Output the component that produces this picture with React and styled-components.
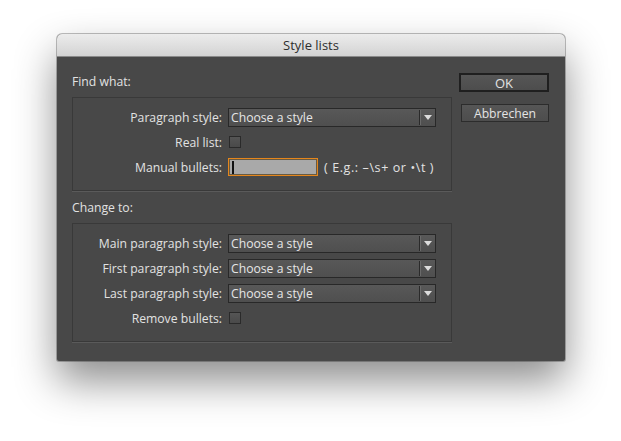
import React from "react";
import styled, { createGlobalStyle } from "styled-components";

const Global = createGlobalStyle`
  html, body { margin: 0; padding: 0; background: #ffffff; }
  body { font-family: "Open Sans", "Noto Sans", sans-serif; }
`;

const Page = styled.div`
  width: 621px;
  height: 441px;
  padding: 34px 0 0 57px;
  box-sizing: border-box;
  overflow: hidden;
`;

const Dialog = styled.div`
  width: 508px;
  height: 327px;
  border-radius: 5px 5px 2px 2px;
  background: #484848;
  box-shadow: 0 20px 42px rgba(0, 0, 0, 0.45), 0 0 0 1px rgba(0, 0, 0, 0.25);
  display: flex;
  flex-direction: column;
  overflow: hidden;
`;

const TitleBar = styled.div`
  height: 22px;
  flex: none;
  background: linear-gradient(#ececec, #d3d3d3);
  border-bottom: 1px solid #8a8a8a;
  display: flex;
  align-items: center;
  justify-content: center;
  font-size: 13px;
  color: #2e2e2e;
`;

const Body = styled.div`
  flex: 1;
  display: flex;
  padding: 0 16px 0 15px;
`;

const Main = styled.div`
  width: 380px;
  display: flex;
  flex-direction: column;
  padding-top: 17px;
`;

const SectionLabel = styled.div`
  height: 16px;
  line-height: 16px;
  font-size: 12.2px;
  color: #e2e2e2;
  margin-top: ${(p) => p.$mt || 0}px;
  margin-bottom: 7px;
`;

const Group = styled.div`
  border: 1px solid #393939;
  box-shadow: 0 1px 0 #5a5a5a;
  padding: 9px 0 13px;
  display: flex;
  flex-direction: column;
  gap: 5px;
`;

const Row = styled.div`
  height: 20px;
  display: grid;
  grid-template-columns: 149px auto auto;
  column-gap: 6px;
  align-items: center;
  justify-content: start;
`;

const Label = styled.div`
  text-align: right;
  font-size: 12.2px;
  color: #e2e2e2;
  white-space: nowrap;
`;

const Select = styled.div`
  height: 17px;
  width: 204px;
  border: 1px solid #282828;
  background: linear-gradient(#585858, #4f4f4f);
  display: flex;
  align-items: center;
  font-size: 12.2px;
  color: #e6e6e6;
  padding-left: 2px;
`;

const SelectText = styled.span`
  flex: 1;
`;

const Sep = styled.span`
  width: 1px;
  height: 15px;
  background: #2a2a2a;
  border-right: 1px solid #6a6a6a;
  margin-right: 3px;
`;

const Arrow = styled.svg`
  width: 8px;
  height: 5px;
  margin-right: 3px;
`;

const Check = styled.div`
  width: 10px;
  height: 10px;
  margin-left: 1px;
  border: 1px solid #2a2a2a;
  background: linear-gradient(#555, #4a4a4a);
`;

const Input = styled.div`
  width: 85px;
  height: 16px;
  border: 1px solid #e4861c;
  box-shadow: inset 0 0 0 1px #6a5a40;
  background: #a9a9a9;
  display: flex;
  align-items: center;
  padding-left: 3px;
`;

const Caret = styled.span`
  width: 2px;
  height: 13px;
  background: #111;
`;

const Hint = styled.span`
  font-size: 12.5px;
  letter-spacing: 0.6px;
  color: #e2e2e2;
  white-space: nowrap;
`;

const Side = styled.div`
  margin-left: auto;
  padding-top: 16px;
  display: flex;
  flex-direction: column;
  align-items: flex-end;
  gap: 12px;
`;

const Button = styled.div`
  width: 86px;
  height: ${(p) => (p.$default ? 15 : 16)}px;
  border: ${(p) => (p.$default ? "2px solid #1f1f1f" : "1px solid #2c2c2c")};
  background: linear-gradient(#565656, #4d4d4d);
  color: #e4e4e4;
  font-size: ${(p) => (p.$default ? 13 : 12.2)}px;
  display: flex;
  align-items: center;
  justify-content: center;
`;

const SelectField = () => (
  <Select>
    <SelectText>Choose a style</SelectText>
    <Sep />
    <Arrow viewBox="0 0 8 5">
      <path d="M0 0 H8 L4 5 Z" fill="#dcdcdc" />
    </Arrow>
  </Select>
);

export default function App() {
  return (
    <>
      <Global />
      <Page>
        <Dialog>
          <TitleBar>Style lists</TitleBar>
          <Body>
            <Main>
              <SectionLabel>Find what:</SectionLabel>
              <Group>
                <Row>
                  <Label>Paragraph style:</Label>
                  <SelectField />
                </Row>
                <Row>
                  <Label>Real list:</Label>
                  <Check />
                </Row>
                <Row>
                  <Label>Manual bullets:</Label>
                  <Input>
                    <Caret />
                  </Input>
                  <Hint>( E.g.: –\s+ or •\t )</Hint>
                </Row>
              </Group>
              <SectionLabel $mt={9}>Change to:</SectionLabel>
              <Group>
                <Row>
                  <Label>Main paragraph style:</Label>
                  <SelectField />
                </Row>
                <Row>
                  <Label>First paragraph style:</Label>
                  <SelectField />
                </Row>
                <Row>
                  <Label>Last paragraph style:</Label>
                  <SelectField />
                </Row>
                <Row>
                  <Label>Remove bullets:</Label>
                  <Check />
                </Row>
              </Group>
            </Main>
            <Side>
              <Button $default>OK</Button>
              <Button>Abbrechen</Button>
            </Side>
          </Body>
        </Dialog>
      </Page>
    </>
  );
}
